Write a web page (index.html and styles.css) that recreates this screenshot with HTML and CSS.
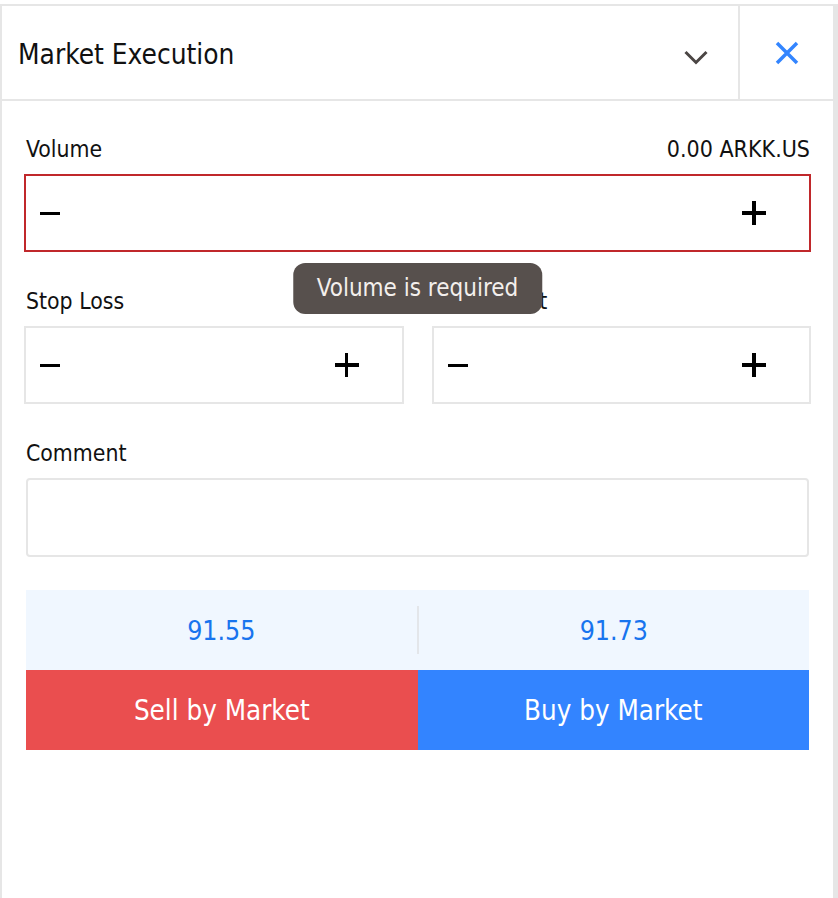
FILE: index.html
```html
<!DOCTYPE html>
<html lang="en">
<head>
  <meta charset="UTF-8">
  <title>Market Execution</title>
  <link rel="stylesheet" href="styles.css">
</head>
<body>

  <div class="window">
    <!-- header -->
    <div class="header">
      <h1 class="title">Market Execution</h1>
      <button class="head-btn chevron" title="Order type">
        <svg width="24" height="24" viewBox="0 0 24 24"><polyline points="1.5,11 12,21.5 22.5,11" fill="none" stroke="#4b4644" stroke-width="3"/></svg>
      </button>
      <button class="head-btn close" title="Close">
        <svg width="24" height="24" viewBox="0 0 24 24"><path d="M2 2 L22 22 M22 2 L2 22" stroke="#3385ff" stroke-width="3.5"/></svg>
      </button>
    </div>

    <!-- form -->
    <div class="form">
      <div class="group">
        <div class="label-row">
          <span>Volume</span>
          <span>0.00 ARKK.US</span>
        </div>
        <div class="field">
          <div class="stepper error">
            <button class="step minus"></button>
            <input type="text" class="step-input">
            <button class="step plus"></button>
          </div>
          <div class="tooltip">Volume is required</div>
        </div>
      </div>

      <div class="group pair">
        <div>
          <div class="label-row"><span>Stop Loss</span></div>
          <div class="stepper">
            <button class="step minus"></button>
            <input type="text" class="step-input">
            <button class="step plus"></button>
          </div>
        </div>
        <div>
          <div class="label-row label-wide"><span>Take Profit</span></div>
          <div class="stepper">
            <button class="step minus"></button>
            <input type="text" class="step-input">
            <button class="step plus"></button>
          </div>
        </div>
      </div>

      <div class="group">
        <div class="label-row"><span>Comment</span></div>
        <input type="text" class="comment">
      </div>

      <div class="trade">
        <div class="prices">
          <span class="price">91.55</span>
          <span class="price-sep"></span>
          <span class="price">91.73</span>
        </div>
        <div class="actions">
          <button class="sell">Sell by Market</button>
          <button class="buy">Buy by Market</button>
        </div>
      </div>
    </div>
  </div>

</body>
</html>
```

FILE: styles.css
```css
* {
  margin: 0; padding: 0; box-sizing: border-box;
}

html, body {
  width: 100%; height: 100%;
  background: #fff;
  font-family: "DejaVu Sans Condensed", "DejaVu Sans", sans-serif;
  font-stretch: condensed;
  color: #111;
}

button, input {
  font: inherit;
  color: inherit;
  background: none;
  border: none;
  outline: none;
}

.window {
  margin-top: 4px;
  height: calc(100% - 4px);
  border-top: 2px solid #e6e6e6;
  border-left: 2px solid #e6e6e6;
  border-right: 5px solid #e6e6e6;
}

/* header */
.header {
  display: flex;
  height: 95px;
  border-bottom: 2px solid #e6e6e6;
}

.title {
  flex: 1;
  display: flex;
  align-items: center;
  padding: 3px 0 0 16px;
  font-size: 27.8px;
  font-weight: normal;
}

.head-btn {
  display: flex;
  align-items: center;
  justify-content: center;
  cursor: pointer;
}

.chevron {
  width: 84px;
}

.close {
  width: 95px;
  border-left: 2px solid #e6e6e6;
}

/* form */
.form {
  padding: 35px 22px 0;
}

.group {
  margin-bottom: 36px;
}

.label-row {
  display: flex;
  justify-content: space-between;
  height: 26px;
  line-height: 26px;
  margin-bottom: 12px;
  padding-left: 2px;
  font-size: 22.8px;
}

.label-row span + span {
  padding-right: 1px;
  font-size: 23px;
}

.label-wide {
  letter-spacing: 0.9px;
}

.field {
  position: relative;
}

.pair {
  display: grid;
  grid-template-columns: minmax(0, 1fr) minmax(0, 1fr);
  column-gap: 28px;
}

.stepper {
  display: flex;
  align-items: center;
  height: 78px;
  padding: 0 43px 0 14px;
  border: 2px solid #e6e6e6;
}

.stepper.error {
  border-color: #c0282b;
}

.step {
  position: relative;
  flex: none;
  width: 24px;
  height: 24px;
  cursor: pointer;
}

.step::before, .step::after {
  content: "";
  position: absolute;
  background: #000;
}

.minus::before {
  left: 0; top: 10.5px;
  width: 20px; height: 3.8px;
}

.plus::before {
  left: 0; top: 10.1px;
  width: 24px; height: 3.8px;
}

.plus::after {
  left: 10.1px; top: 0;
  width: 3.8px; height: 24px;
}

.minus::after {
  display: none;
}

.step-input {
  flex: 1;
  min-width: 0;
  height: 100%;
  padding: 0 10px;
  font-size: 23px;
}

.tooltip {
  position: absolute;
  top: calc(100% + 11px);
  left: 50%;
  transform: translateX(-50%);
  height: 51px;
  line-height: 51px;
  padding: 0 24px;
  border-radius: 12px;
  background: #57504d;
  color: #f3efec;
  font-size: 24px;
  white-space: nowrap;
  z-index: 2;
}

.comment {
  display: block;
  width: calc(100% - 4px);
  height: 79px;
  margin: 0 2px;
  padding: 0 12px;
  border: 2px solid #e6e6e6;
  border-radius: 4px;
  font-size: 23px;
}

/* prices and buttons */
.trade {
  margin: -3px 2px 0;
}

.prices {
  display: grid;
  grid-template-columns: 1fr 2px 1fr;
  align-items: center;
  height: 80px;
  background: #f0f7ff;
}

.price {
  text-align: center;
  font-size: 26.5px;
  color: #1874ee;
}

.price-sep {
  height: 48px;
  background: #e3e6ea;
}

.actions {
  display: grid;
  grid-template-columns: 1fr 1fr;
}

.actions button {
  height: 80px;
  color: #fff;
  font-size: 27.5px;
  cursor: pointer;
}

.sell {
  background: #ea4e4f;
}

.buy {
  background: #3384ff;
}
```
